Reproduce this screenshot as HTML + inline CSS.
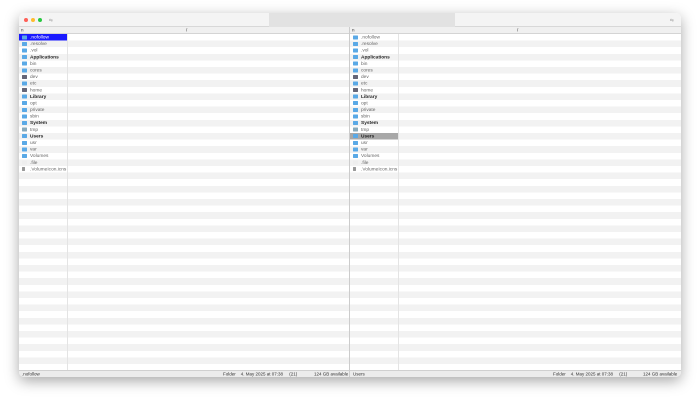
<!DOCTYPE html><html><head><style>
*{margin:0;padding:0;box-sizing:border-box}
body{width:700px;height:402px;background:#fff;position:relative;overflow:hidden;font-family:"Liberation Sans",sans-serif;color:#333}
.win{position:absolute;left:19px;top:13px;width:662px;height:364px;background:#fff;border-radius:5px;box-shadow:0 4px 14px rgba(0,0,0,.35);overflow:hidden}
.tb{position:absolute;left:0;top:0;height:14px;width:662px;background:#f4f4f4;border-bottom:1px solid #d8d8d8}
.tab2{position:absolute;left:250px;top:0;width:186px;height:14px;background:#e2e2e2}
.dot{position:absolute;top:5px;width:4px;height:4px;border-radius:50%}
.pane{position:absolute;top:14px;height:350px;width:331px;overflow:hidden}
.hdr{height:7px;background:#f0f0f0;border-bottom:1px solid #d4d4d4;position:relative}
.rows{position:absolute;top:7px;left:0;right:0;bottom:7px;background:repeating-linear-gradient(#fff 0 6.6px,#f2f2f2 6.6px 13.2px)}
.col{position:absolute;top:7px;bottom:7px;width:1px;background:#e4e4e4}
.list{position:absolute;left:0;top:0;width:96px;transform:scale(.5);transform-origin:0 0;font-size:9.6px}
.r{height:13.2px;line-height:13.6px;padding-left:22px;position:relative;width:96px;color:#666;white-space:nowrap}
.r i{position:absolute;left:6px;top:2.6px;width:10px;height:8px;background:#5aa9e6;border-radius:1px}
.r.b{font-weight:bold;color:#222}
.sel{background:#1a1aff;color:#fff}
.sel2{background:#a8a8a8;color:#222}
.st{position:absolute;bottom:0;left:0;right:0;height:7px;background:#ececec;border-top:1px solid #d0d0d0}
.t{position:absolute;transform:scale(.5);transform-origin:0 0;font-size:9px;white-space:nowrap;line-height:12px;top:0}
</style></head><body>
<div class="win">
<div class="tb"><div class="tab2"></div>
<div class="dot" style="left:5px;background:#fe5f57"></div>
<div class="dot" style="left:12px;background:#febc2e"></div>
<div class="dot" style="left:19px;background:#28c840"></div>
<span class="t" style="left:30px;top:4px;color:#aaa">⇆</span>
<span class="t" style="left:651px;top:4px;color:#aaa">⇆</span>
</div>

<div class="pane" style="left:0;border-right:1px solid #ccc">
<div class="hdr"><span class="t" style="left:2px">n</span><span class="t" style="left:167px">/</span></div>
<div class="rows"><div class="list">
<div class="r sel"><i></i>.nofollow</div><div class="r"><i></i>.resolve</div><div class="r"><i></i>.vol</div><div class="r b"><i></i>Applications</div><div class="r"><i></i>bin</div><div class="r"><i></i>cores</div><div class="r"><i style="background:#667"></i>dev</div><div class="r"><i></i>etc</div><div class="r"><i style="background:#667"></i>home</div><div class="r b"><i></i>Library</div><div class="r"><i></i>opt</div><div class="r"><i></i>private</div><div class="r"><i></i>sbin</div><div class="r b"><i></i>System</div><div class="r"><i style="background:#8ab"></i>tmp</div><div class="r b"><i></i>Users</div><div class="r"><i></i>usr</div><div class="r"><i></i>var</div><div class="r"><i></i>Volumes</div><div class="r"><i style="background:#eee"></i>.file</div><div class="r"><i style="background:#999;width:6px"></i>.VolumeIcon.icns</div>
</div></div>
<div class="col" style="left:48px"></div>
<div class="st"><span class="t" style="left:3px">.nofollow</span><span class="t" style="left:204px">Folder &nbsp;&nbsp; 4. May 2025 at 07:38 &nbsp;&nbsp;&nbsp; (21)</span><span class="t" style="left:295px">124 GB available</span></div>
</div>

<div class="pane" style="left:331px">
<div class="hdr"><span class="t" style="left:2px">n</span><span class="t" style="left:167px">/</span></div>
<div class="rows"><div class="list">
<div class="r"><i></i>.nofollow</div><div class="r"><i></i>.resolve</div><div class="r"><i></i>.vol</div><div class="r b"><i></i>Applications</div><div class="r"><i></i>bin</div><div class="r"><i></i>cores</div><div class="r"><i style="background:#667"></i>dev</div><div class="r"><i></i>etc</div><div class="r"><i style="background:#667"></i>home</div><div class="r b"><i></i>Library</div><div class="r"><i></i>opt</div><div class="r"><i></i>private</div><div class="r"><i></i>sbin</div><div class="r b"><i></i>System</div><div class="r"><i style="background:#8ab"></i>tmp</div><div class="r b sel2"><i></i>Users</div><div class="r"><i></i>usr</div><div class="r"><i></i>var</div><div class="r"><i></i>Volumes</div><div class="r"><i style="background:#eee"></i>.file</div><div class="r"><i style="background:#999;width:6px"></i>.VolumeIcon.icns</div>
</div></div>
<div class="col" style="left:48px"></div>
<div class="st"><span class="t" style="left:3px">Users</span><span class="t" style="left:203px">Folder &nbsp;&nbsp; 4. May 2025 at 07:38 &nbsp;&nbsp;&nbsp; (21)</span><span class="t" style="left:293px">124 GB available</span></div>
</div>
</div>
</body></html>
